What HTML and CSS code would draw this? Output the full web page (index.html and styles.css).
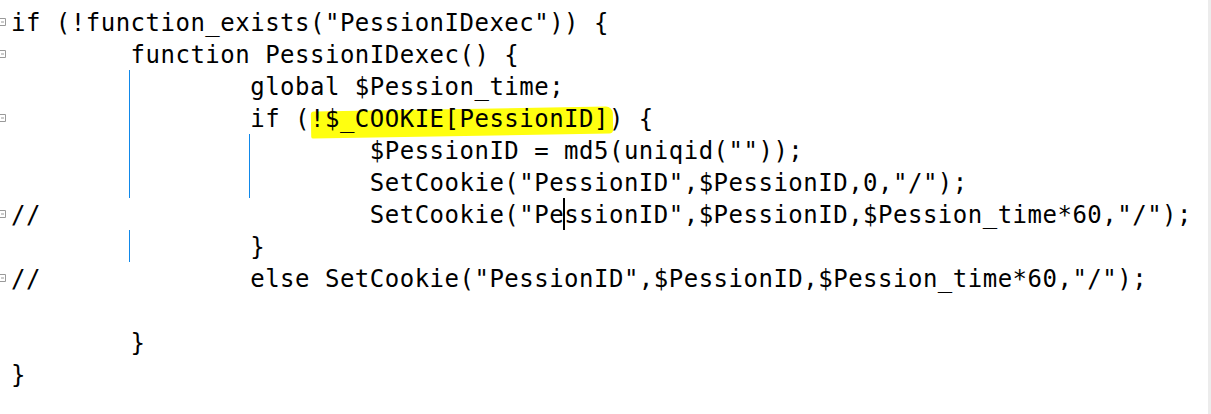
FILE: index.html
```html
<!DOCTYPE html>
<html>
<head>
<meta charset="utf-8">
<link rel="stylesheet" href="styles.css">
</head>
<body>
<div class="window">
  <div class="editor">
    <div class="guide g1"></div>
    <div class="guide g2"></div>
    <div class="guide g3"></div>
    <div class="line"><span class="gutter"><svg class="fold" width="6" height="8" viewBox="0 0 6 8"><path d="M0 .5H5.5V7.5H0M1 4H4" fill="none" stroke="#9a9a9a" stroke-width="1"/></svg></span><span class="code">if (!function_exists("PessionIDexec")) {</span></div>
    <div class="line"><span class="gutter"><svg class="fold" width="6" height="8" viewBox="0 0 6 8"><path d="M0 .5H5.5V7.5H0M1 4H4" fill="none" stroke="#9a9a9a" stroke-width="1"/></svg></span><span class="code">        function PessionIDexec() {</span></div>
    <div class="line"><span class="gutter"></span><span class="code">                global $Pession_time;</span></div>
    <div class="line"><span class="gutter"><svg class="fold" width="6" height="8" viewBox="0 0 6 8"><path d="M0 .5H5.5V7.5H0M1 4H4" fill="none" stroke="#9a9a9a" stroke-width="1"/></svg></span><span class="code">                if (<span class="mark">!$_COOKIE[PessionID]</span>) {</span></div>
    <div class="line"><span class="gutter"></span><span class="code">                        $PessionID = md5(uniqid(""));</span></div>
    <div class="line"><span class="gutter"></span><span class="code">                        SetCookie("PessionID",$PessionID,0,"/");</span></div>
    <div class="line"><span class="gutter"><svg class="fold" width="6" height="8" viewBox="0 0 6 8"><path d="M0 .5H5.5V7.5H0M1 4H4" fill="none" stroke="#9a9a9a" stroke-width="1"/></svg></span><span class="code">//                      SetCookie("Pe<span class="caret"></span>ssionID",$PessionID,$Pession_time*60,"/");</span></div>
    <div class="line"><span class="gutter"></span><span class="code">                }</span></div>
    <div class="line"><span class="gutter"><svg class="fold" width="6" height="8" viewBox="0 0 6 8"><path d="M0 .5H5.5V7.5H0M1 4H4" fill="none" stroke="#9a9a9a" stroke-width="1"/></svg></span><span class="code">//              else SetCookie("PessionID",$PessionID,$Pession_time*60,"/");</span></div>
    <div class="line"><span class="gutter"></span><span class="code"> </span></div>
    <div class="line"><span class="gutter"></span><span class="code">        }</span></div>
    <div class="line"><span class="gutter"></span><span class="code">}</span></div>
  </div>
  <div class="strip"></div>
</div>
</body>
</html>
```

FILE: styles.css
```css
html, body {
  margin: 0;
  padding: 0;
  background: #ffffff;
}

.window {
  display: flex;
  width: 1211px;
  height: 414px;
  overflow: hidden;
}

.editor {
  position: relative;
  flex: 1;
  padding-top: 6px;
  background: #ffffff;
}

.line {
  display: flex;
  align-items: center;
  height: 32px;
}

.gutter {
  display: flex;
  align-items: center;
  width: 11px;
  height: 32px;
  flex: none;
}

.fold {
  display: block;
}

.code {
  font-family: "DejaVu Sans Mono", "Liberation Mono", monospace;
  font-size: 24px;
  letter-spacing: 0.5px;
  line-height: 32px;
  white-space: pre;
  color: #000000;
  position: relative;
  top: 1px;
}

.mark {
  position: relative;
  z-index: 0;
}

.mark::before {
  content: "";
  position: absolute;
  left: 1px;
  right: -4px;
  top: 4px;
  bottom: -3px;
  background: #ffff10;
  border-radius: 3px 7px 4px 2px;
  transform: rotate(-1deg);
  z-index: -1;
}

.caret {
  position: relative;
}

.caret::after {
  content: "";
  position: absolute;
  left: -1px;
  top: -3px;
  width: 2px;
  height: 32px;
  background: #000000;
}

.guide {
  position: absolute;
  width: 1px;
  background: #0f88ea;
}

.g1 {
  left: 129px;
  top: 70px;
  height: 128px;
}

.g2 {
  left: 129px;
  top: 230px;
  height: 32px;
}

.g3 {
  left: 249px;
  top: 134px;
  height: 64px;
}

.strip {
  width: 3px;
  flex: none;
  background: #ececec;
}
```
